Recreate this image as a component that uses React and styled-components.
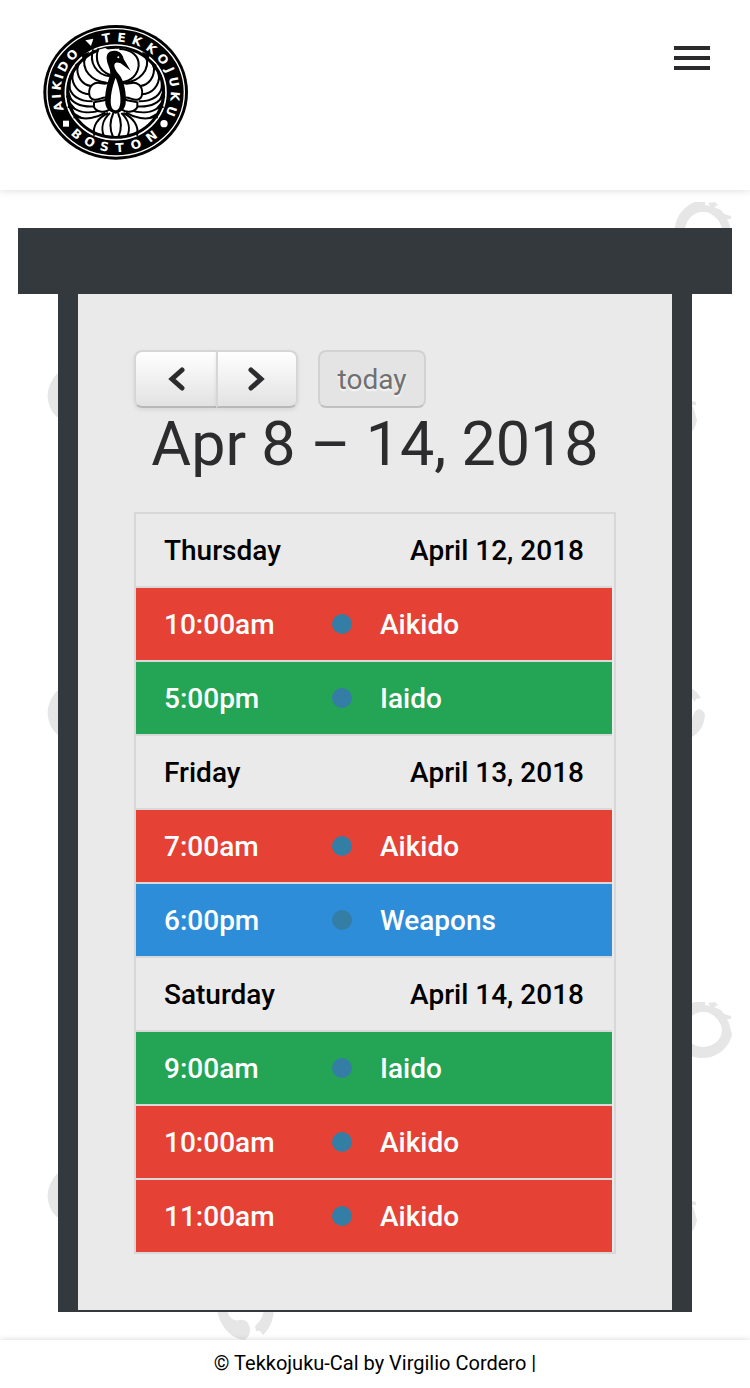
import React from "react";
import styled, { createGlobalStyle } from "styled-components";

const GlobalStyle = createGlobalStyle`
  *, *::before, *::after { box-sizing: border-box; }
  body {
    margin: 0;
    background: #fff;
    color: #000;
    font-family: Roboto, "Liberation Sans", sans-serif;
    font-size: 28px;
  }
`;

const Page = styled.div`
  display: flex;
  flex-direction: column;
  min-height: 100vh;
`;

const Header = styled.header`
  position: relative;
  z-index: 1;
  display: flex;
  justify-content: space-between;
  align-items: flex-start;
  padding: 25px 40px 30px 43px;
  background: #fff;
  box-shadow: 0 0 8px rgba(0, 0, 0, 0.16);
`;

const HomeLink = styled.a`
  display: block;
  svg { display: block; }
`;

const MenuButton = styled.button`
  display: flex;
  flex-direction: column;
  gap: 6px;
  margin-top: 21px;
  padding: 0;
  border: 0;
  background: none;
  cursor: pointer;
`;

const MenuLine = styled.span`
  width: 36px;
  height: 4px;
  background: #2a2a2c;
`;

const Main = styled.main`
  position: relative;
  flex: 1;
  padding: 38px 18px 28px;
  overflow: hidden;
`;

const Pattern = styled.svg`
  position: absolute;
  inset: 0;
  width: 100%;
  height: 100%;
`;

const Lintel = styled.div`
  position: relative;
  height: 66px;
  background: #34393d;
`;

const Panel = styled.section`
  position: relative;
  margin: 0 40px;
  padding: 56px;
  border: solid #34393d;
  border-width: 0 20px 2px;
  background: #eaeaea;
`;

const Toolbar = styled.div`
  display: flex;
  gap: 20px;
`;

const ButtonGroup = styled.div`
  display: flex;
`;

const CalButton = styled.button`
  display: flex;
  align-items: center;
  justify-content: center;
  height: 58px;
  min-width: ${(p) => (p.$wide ? "108px" : "82px")};
  padding: 0 16px;
  border: 2px solid;
  border-color: #d6d6d6 #d6d6d6 #b8b8b8;
  border-radius: ${(p) => p.$radius || "8px"};
  background: linear-gradient(#fff, #e2e2e2);
  background-clip: padding-box;
  box-shadow: 0 2px 4px rgba(0, 0, 0, 0.08);
  color: #2c2c2e;
  font: inherit;
  text-shadow: 0 2px 2px rgba(255, 255, 255, 0.75);
  cursor: pointer;

  &:not(:last-child) { border-right-width: 0; }

  &:disabled {
    border-color: #d2d2d2 #d2d2d2 #c0c0c0;
    background: #e4e4e4;
    box-shadow: none;
    color: #707070;
    cursor: default;
  }
`;

const Title = styled.h2`
  margin: 0 0 32px;
  color: #2c2c2e;
  font-size: 61px;
  font-weight: 400;
  line-height: 72px;
  text-align: center;
`;

const ListFrame = styled.div`
  padding-right: 2px;
  border: 2px solid #d8d8d8;
`;

const List = styled.table`
  width: 100%;
  table-layout: fixed;
  border-spacing: 0;
  font-weight: 500;
`;

const Row = styled.tr`
  background: ${(p) => p.$fill || "transparent"};
  color: ${(p) => (p.$fill ? "#fff" : "#000")};

  > * {
    height: 74px;
    padding: 0;
    border-bottom: 2px solid #d8d8d8;
    background-clip: padding-box;
  }
`;

const Body = styled.tbody`
  &:last-child tr:last-child > * {
    height: 72px;
    border-bottom: 0;
  }
`;

const DayHead = styled.th`
  font-weight: 500;
`;

const DayLine = styled.div`
  display: flex;
  justify-content: space-between;
  padding: 0 28px;
`;

const TextCell = styled.td`
  && { padding-left: 28px; }
`;

const TimeCol = styled.col`
  width: 196px;
`;

const DotCol = styled.col`
  width: 20px;
`;

const Dot = styled.span`
  display: block;
  width: 20px;
  height: 20px;
  border-radius: 50%;
  background: #347da5;
`;

const Footer = styled.footer`
  position: relative;
  padding: 11px 16px 13px;
  background: #fff;
  box-shadow: 0 0 6px rgba(0, 0, 0, 0.16);
  font-size: 20px;
  line-height: 24px;
  text-align: center;
`;

const LogoText = styled.text`
  fill: #fff;
  font-family: "DejaVu Sans", sans-serif;
  font-size: 37px;
  font-weight: 700;
`;

/* Half advance widths of the bold capitals at the badge's text size. */
const HALF = {
  A: 14, B: 14, D: 15, E: 13, I: 7, J: 7, K: 14, N: 15, O: 16, S: 13, T: 13, U: 15,
};

/* Sets a word round the badge's ring, one angle for each letter. */
function RingWord({ word, angles, below }) {
  const rx = below ? 191 : 165;
  const ry = below ? 179 : 152;
  const side = below ? -1 : 1;
  const spots = angles.map((deg, i) => {
    const t = (deg * Math.PI) / 180;
    const half = HALF[word[i]];
    return {
      x: 257 + rx * Math.sin(t) - half * Math.cos(t),
      y: 232 - side * (ry * Math.cos(t) + half * Math.sin(t)),
      r: side * deg,
    };
  });
  return (
    <LogoText
      x={spots.map((s) => s.x.toFixed(1)).join(" ")}
      y={spots.map((s) => s.y.toFixed(1)).join(" ")}
      rotate={spots.map((s) => s.r).join(" ")}
    >
      {word}
    </LogoText>
  );
}

/* Gaps between the feathers of one wing, top to bottom. */
const FEATHERS = [
  "M165 122 C153 165 185 200 230 203",
  "M143 148 C137 186 158 211 184 213",
  "M126 178 C126 214 148 237 178 238",
  "M116 208 C121 244 150 259 188 259",
  "M114 240 C130 270 162 277 196 274",
  "M122 272 C144 293 178 297 212 286",
  "M142 305 C165 316 200 309 226 293",
  "M193 362 C186 334 204 308 234 294",
];

/* Dark notches where the feather tips part at the rim. */
const NOTCHES = [
  "M154 120 L178 110 L163 144Z",
  "M134 150 L154 134 L142 168Z",
  "M118 182 L134 162 L128 198Z",
  "M110 214 L122 192 L122 228Z",
  "M108 246 L116 226 L128 258Z",
  "M112 278 L120 260 L140 284Z",
  "M130 310 L134 294 L162 310Z",
];

function Wing({ mirror }) {
  return (
    <g transform={mirror ? "translate(514 0) scale(-1 1)" : undefined}>
      {!mirror && <path d="M190 103 C176 140 198 180 240 184" fill="none" stroke="#000" strokeWidth="6" />}
      <g fill="none" stroke="#000" strokeWidth="6">
        {FEATHERS.map((d) => <path key={d} d={d} />)}
      </g>
      {NOTCHES.map((d) => <path key={d} d={d} />)}
      <g fill="#fff" stroke="#000" strokeWidth="6">
        <path d="M178 238 C174 212 194 198 214 205 C224 207 236 205 240 200 L236 250 C222 240 206 258 192 254 C184 252 178 246 178 238Z" />
        <path d="M192 262 C204 256 216 262 236 250 L238 284 C222 296 198 290 192 276Z" />
      </g>
    </g>
  );
}

function Logo() {
  return (
    <svg width="145" height="135" viewBox="39 30 435 405" role="img" aria-label="Aikido Tekkojuku Boston">
      <ellipse cx="257" cy="232" rx="217" ry="202" fill="#000" />
      <ellipse cx="257" cy="232" rx="206" ry="191" fill="none" stroke="#fff" strokeWidth="4" />
      <ellipse cx="257" cy="232" rx="151" ry="142" fill="none" stroke="#fff" strokeWidth="5" />
      <RingWord word="AIKIDO" angles={[-105, -94, -83, -73, -62, -47]} />
      <RingWord word="TEKKOJUKU" angles={[-9, 6, 21, 37, 53, 66, 79, 94, 110]} />
      <RingWord word="BOSTON" angles={[-41, -26, -11, 4, 20, 37]} below />
      <path d="M166 76 L190 71 L183 93Z" fill="#fff" />
      <rect x="99" y="317" width="18" height="18" fill="#fff" />
      <circle cx="402" cy="326" r="11" fill="#fff" />
      <ellipse cx="257" cy="232" rx="139" ry="131" fill="#fff" />
      <Wing />
      <Wing mirror />
      <path d="M252 104 C296 90 330 118 326 152 C323 180 304 198 276 201 L256 190 L250 150Z" fill="#fff" />
      <path d="M268 102 C304 102 328 124 326 152 C323 180 304 198 276 201" fill="none" stroke="#000" strokeWidth="6" />
      <path d="M204 104 C192 132 206 170 242 178 L250 150 L244 110 L226 99Z" fill="#fff" />
      <g fill="none" stroke="#000" strokeWidth="6">
        <path d="M206 100 C192 132 206 168 240 180" />
        <path d="M250 294 C240 316 238 342 249 366" />
        <path d="M264 294 C274 316 276 342 265 366" />
        <path d="M240 294 C218 314 212 340 222 364" />
        <path d="M274 294 C296 314 302 340 292 364" />
      </g>
      <path d="M230 130 C229 112 244 104 260 108 C272 111 279 120 281 132 L302 167 L272 145 C262 141 254 140 253 151 C253 164 264 174 271 184 C284 204 290 240 287 266 C284 284 271 292 257 296 C243 292 229 284 226 266 C223 234 232 205 240 180 C244 162 231 151 230 130Z" fill="#000" />
      <path d="M257 188 C268 216 274 246 270 270 C268 280 263 286 257 286 C250 286 245 280 243 270 C240 246 246 216 257 188Z" fill="#fff" />
      <circle cx="265" cy="127" r="3" fill="#fff" />
    </svg>
  );
}

/* Brushed circles scattered over the page background. */
const CIRCLES = [
  [703, 40], [76, 205], [668, 226], [76, 522], [703, 840], [76, 1005], [668, 1026],
];

function BrushedCircles() {
  return (
    <Pattern viewBox="0 0 750 1150" preserveAspectRatio="xMidYMin slice" aria-hidden="true">
      <defs>
        <path
          id="brush"
          d="M-8 -28 L2 -28 L2 -25 L7 -24 L5 -27 L12 -28 L15 -25 L11 -23 L18 -20 L20 -17 L24 -15 L28 -14 L28 -11 L24 -11 C27 -6 27 -2 29 4 C27 17 14 28 1 28 C-15 29 -26 19 -28 5 C-30 -10 -20 -24 -8 -28Z M-3 -18 C-12 -16 -18 -8 -18 1 C-18 11 -9 17 1 17 C12 16 19 9 19 -1 C18 -8 13 -13 8 -16 L4 -18Z"
          fillRule="evenodd"
        />
      </defs>
      <g fill="#e6e6e6">
        {CIRCLES.map(([x, y]) => (
          <use key={`${x}-${y}`} href="#brush" x={x} y={y} />
        ))}
        <path d="M688 497 C694 499 698 503 701 508 L696 509 L695 512 C692 508 690 506 686 505Z" />
        <path d="M692 530 C694 516 703 517 705 525 C704 537 698 545 688 549 L688 536 C691 534 693 532 692 530Z" />
        <path d="M216 1112 L227 1112 C226 1126 232 1132 240 1130 C251 1128 254 1146 244 1150 C228 1148 217 1132 216 1112Z" />
        <path d="M264 1112 L274 1112 C275 1126 271 1138 263 1145 L260 1141 L256 1141 L255 1136 C262 1130 265 1122 264 1112Z" />
      </g>
    </Pattern>
  );
}

function Chevron({ flip }) {
  return (
    <svg width="18" height="24" viewBox="0 0 18 24" aria-hidden="true">
      <path
        d={flip ? "M3 3 L13 12 L3 21" : "M15 3 L5 12 L15 21"}
        fill="none"
        stroke="#2c2c2e"
        strokeWidth="5"
        strokeLinecap="round"
      />
    </svg>
  );
}

const FILL = { Aikido: "#e54235", Iaido: "#24a555", Weapons: "#2e8dd8" };

const DAYS = [
  { day: "Thursday", date: "April 12, 2018", events: [["10:00am", "Aikido"], ["5:00pm", "Iaido"]] },
  { day: "Friday", date: "April 13, 2018", events: [["7:00am", "Aikido"], ["6:00pm", "Weapons"]] },
  { day: "Saturday", date: "April 14, 2018", events: [["9:00am", "Iaido"], ["10:00am", "Aikido"], ["11:00am", "Aikido"]] },
];

export default function App() {
  return (
    <Page>
      <GlobalStyle />
      <Header>
        <HomeLink href="#"><Logo /></HomeLink>
        <MenuButton type="button" aria-label="Menu">
          <MenuLine />
          <MenuLine />
          <MenuLine />
        </MenuButton>
      </Header>
      <Main>
        <BrushedCircles />
        <Lintel />
        <Panel>
          <Toolbar>
            <ButtonGroup>
              <CalButton type="button" aria-label="Previous week" $radius="8px 0 0 8px"><Chevron /></CalButton>
              <CalButton type="button" aria-label="Next week" $radius="0 8px 8px 0"><Chevron flip /></CalButton>
            </ButtonGroup>
            <CalButton type="button" disabled $wide>today</CalButton>
          </Toolbar>
          <Title>Apr 8 – 14, 2018</Title>
          <ListFrame>
            <List>
              <colgroup>
                <TimeCol />
                <DotCol />
                <col />
              </colgroup>
              {DAYS.map(({ day, date, events }) => (
                <Body key={day}>
                  <Row>
                    <DayHead colSpan={3} scope="rowgroup">
                      <DayLine><span>{day}</span><span>{date}</span></DayLine>
                    </DayHead>
                  </Row>
                  {events.map(([time, name]) => (
                    <Row key={time} $fill={FILL[name]}>
                      <TextCell>{time}</TextCell>
                      <td><Dot /></td>
                      <TextCell>{name}</TextCell>
                    </Row>
                  ))}
                </Body>
              ))}
            </List>
          </ListFrame>
        </Panel>
      </Main>
      <Footer>© Tekkojuku-Cal by Virgilio Cordero |</Footer>
    </Page>
  );
}
